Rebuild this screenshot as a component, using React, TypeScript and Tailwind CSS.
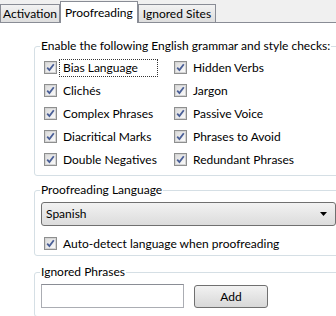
import React from "react";

const font = { fontFamily: 'Lato, "Noto Sans", sans-serif' };

function Check() {
  return (
    <span className="relative flex h-[13px] w-[13px] shrink-0 items-center justify-center border border-[#8e8f8f] bg-white">
      <span className="flex h-[11px] w-[11px] items-center justify-center border border-[#d4d4d4] bg-gradient-to-br from-[#dcdcdc] to-[#fafafa]">
        <svg width="9" height="9" viewBox="0 0 9 9">
          <path d="M1.2 4.6 L3.4 7 L7.8 1.2" fill="none" stroke="#4a5f97" strokeWidth="1.8" />
        </svg>
      </span>
    </span>
  );
}

function Item({ label, focus }: { label: string; focus?: boolean }) {
  return (
    <div className="flex h-[23px] items-center">
      <Check />
      <span
        className={
          "ml-[2px] flex h-[18px] items-center whitespace-nowrap px-[3px] text-[12px] text-black " +
          (focus ? "w-[99px] border border-dotted border-[#333]" : "border border-transparent")
        }
      >
        {label}
      </span>
    </div>
  );
}

function Tab({ label, active, wide }: { label: string; active?: boolean; wide?: boolean }) {
  return active ? (
    <div className="relative z-10 -mb-px flex h-[22px] items-start whitespace-nowrap border border-b-0 border-[#898c95] bg-white px-[4px] pt-[2px] text-[12px]">
      {label}
    </div>
  ) : (
    <div
      className={
        "flex h-[18px] items-center whitespace-nowrap border border-b-0 border-[#898c95] bg-gradient-to-b from-[#f2f2f2] to-[#dedede] text-[12px] " +
        (wide ? "px-[4px]" : "px-[2px]")
      }
    >
      {label}
    </div>
  );
}

export default function App() {
  const left = ["Bias Language", "Clichés", "Complex Phrases", "Diacritical Marks", "Double Negatives"];
  const right = ["Hidden Verbs", "Jargon", "Passive Voice", "Phrases to Avoid", "Redundant Phrases"];
  return (
    <div className="h-[316px] w-[336px] overflow-hidden bg-white text-black" style={font}>
      <div className="flex h-[23px] items-end border-b border-[#898c95] bg-[#f0f0f0]">
        <Tab label="Activation" />
        <Tab label="Proofreading" active />
        <Tab label="Ignored Sites" wide />
      </div>
      <div className="pl-[34px]">
        <fieldset className="mt-[15px] w-[320px] rounded-[3px] border border-[#d5dfe5] pb-[4px] pl-[9px]">
          <legend className="ml-[-4px] h-[16px] whitespace-nowrap px-[1px] text-[12px] leading-[16px]">
            Enable the following English grammar and style checks:
          </legend>
          <div className="flex pt-[2px]">
            <div className="w-[130px]">
              {left.map((l, i) => (
                <Item key={l} label={l} focus={i === 0} />
              ))}
            </div>
            <div>
              {right.map((l) => (
                <Item key={l} label={l} />
              ))}
            </div>
          </div>
        </fieldset>

        <fieldset className="mt-[6px] w-[320px] rounded-[3px] border border-[#d5dfe5] pb-[1px] pl-[6px]">
          <legend className="ml-[-1px] h-[16px] whitespace-nowrap px-[1px] text-[12px] leading-[16px]">Proofreading Language</legend>
          <div className="mt-[4px] flex h-[24px] w-[295px] items-center justify-between rounded-[3px] border border-[#707070] bg-gradient-to-b from-[#f2f2f2] to-[#dcdcdc] pl-[4px] pr-[8px] text-[12px]">
            <span>Spanish</span>
            <svg width="7" height="4" viewBox="0 0 7 4">
              <path d="M0 0 H7 L3.5 4 Z" fill="#000" />
            </svg>
          </div>
          <div className="ml-[3px] mt-[6px] h-[22px]">
            <Item label="Auto-detect language when proofreading" />
          </div>
        </fieldset>

        <fieldset className="mt-[8px] w-[320px] rounded-[3px] border border-[#d5dfe5] pb-[8px] pl-[6px]">
          <legend className="ml-[-1px] h-[16px] whitespace-nowrap px-[1px] text-[12px] leading-[16px]">Ignored Phrases</legend>
          <div className="mt-[4px] flex items-start">
            <div className="h-[24px] w-[143px] border border-[#abadb3] border-t-[#8a8d95] bg-white" />
            <button className="ml-[10px] mt-px flex h-[23px] w-[74px] items-center justify-center rounded-[3px] border border-[#707070] bg-gradient-to-b from-[#f2f2f2] to-[#d8d8d8] text-[12px]">
              Add
            </button>
          </div>
        </fieldset>
      </div>
    </div>
  );
}
